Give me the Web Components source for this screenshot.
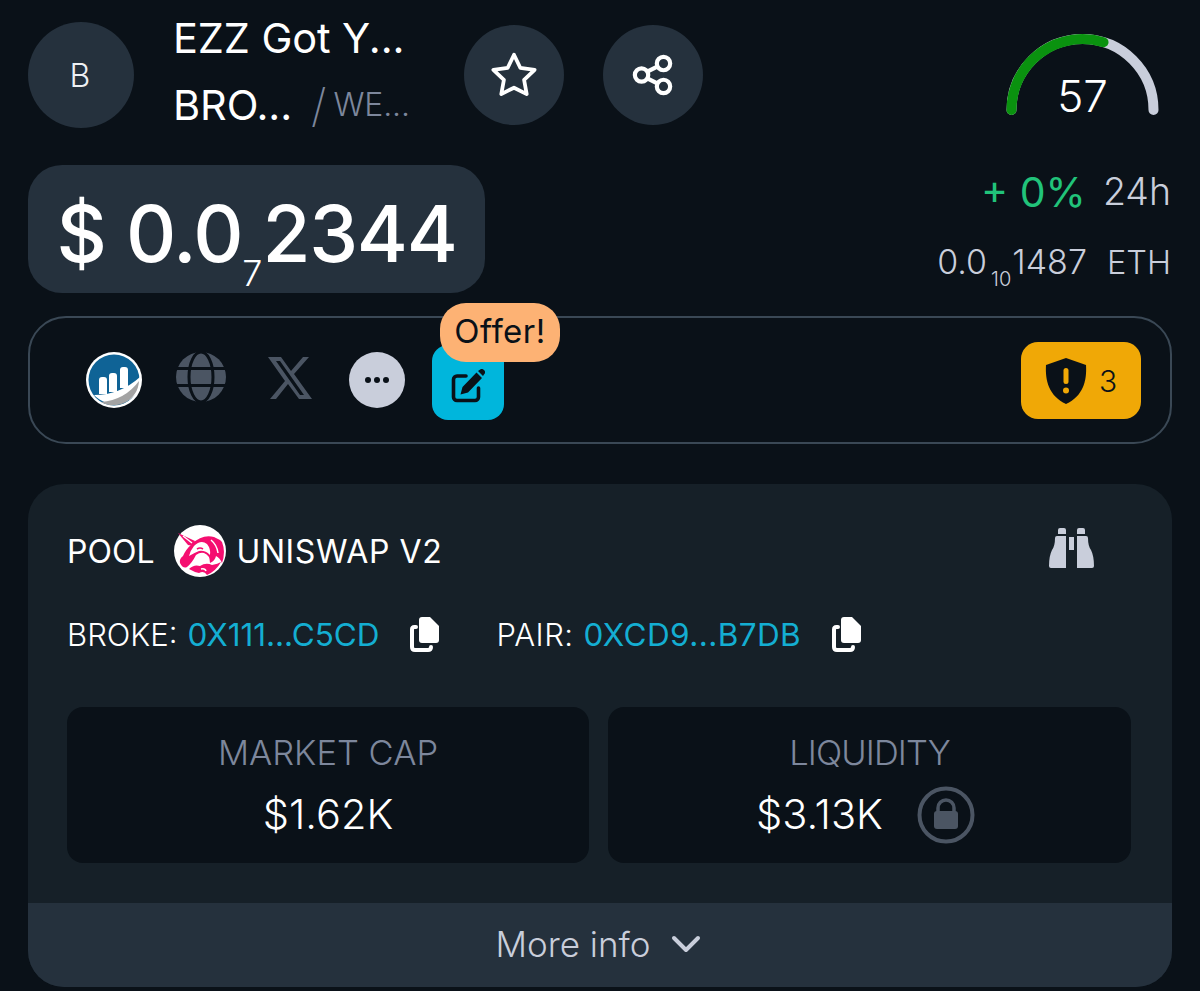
<!DOCTYPE html>
<html lang="en">
<head>
<meta charset="utf-8">
<title>Token</title>
<style>
  html, body { margin: 0; background: #0a1118; }
  body { font-family: "Inter", "Liberation Sans", sans-serif; color: #fff; }
  token-page { display: block; width: 1200px; height: 991px; overflow: hidden; }
</style>
</head>
<body>
<token-page></token-page>

<template id="token-head-tpl">
  <style>
    :host { display: flex; align-items: flex-start; height: 165px; padding-top: 22px; box-sizing: border-box; }
    .avatar { width: 106px; height: 106px; border-radius: 50%; background: #25313d; display: flex; align-items: center; justify-content: center; font-size: 32px; font-weight: 300; color: #eef0f4; flex: none; padding-right: 2px; box-sizing: border-box; }
    .names { width: 290px; margin-left: 39px; flex: none; margin-top: -17px; margin-right: 1px; }
    .line { font-size: 41.5px; line-height: 66px; height: 66px; font-weight: 400; white-space: nowrap; display: flex; align-items: center; letter-spacing: -0.1px; }
    .line + .line { margin-top: 1px; }
    .slash { color: #7d879c; font-size: 46px; font-weight: 200; margin-left: 19px; }
    .net { color: #7d879c; font-size: 32px; font-weight: 300; margin-left: 7px; }
    .round { width: 100px; height: 100px; border-radius: 50%; background: #25313d; display: flex; align-items: center; justify-content: center; flex: none; margin-top: 3px; }
    .star { margin-right: 39px; }
    slot { display: block; margin-left: auto; }
  </style>
  <div class="avatar">B</div>
  <div class="names">
    <div class="line">EZZ Got Y...</div>
    <div class="line">BRO...<span class="slash">/</span><span class="net">WE...</span></div>
  </div>
  <div class="round star">
    <svg width="50" height="50" viewBox="0 0 48 48"><path d="M24 4.500l6 12.600 13.800 1.900-10.100 9.600 2.500 13.700L24 36.200l-12.200 6.100 2.500-13.700L4.200 19l13.800-1.900z" fill="none" stroke="#fff" stroke-width="3.600" stroke-linejoin="round"/></svg>
  </div>
  <div class="round">
    <svg width="42" height="42" viewBox="0 0 44 44" fill="none" stroke="#fff" stroke-width="4.400"><circle cx="10" cy="22" r="7"/><circle cx="33" cy="10" r="7"/><circle cx="33" cy="34" r="7"/><path d="M16 18.500l11-5.500M16 25.500l11 5.500"/></svg>
  </div>
  <slot></slot>
</template>

<template id="score-gauge-tpl">
  <style>
    :host { display: block; position: relative; width: 155px; height: 95px; margin-right: 12px; margin-top: 11px; }
    svg { display: block; }
    .n { position: absolute; left: 0; right: 0; top: 36px; text-align: center; font-size: 44px; line-height: 54px; font-weight: 300; }
  </style>
  <svg width="155" height="95" viewBox="0 0 155 95" fill="none" stroke-width="10" stroke-linecap="round">
    <path d="M6.500 77a71 71 0 0 1 142 0" stroke="#c9cedb"/>
    <path d="M6.500 77a71 71 0 0 1 92-67.800" stroke="#0a920f"/>
  </svg>
  <div class="n"><slot></slot></div>
</template>

<template id="price-row-tpl">
  <style>
    :host { display: flex; justify-content: space-between; align-items: flex-start; height: 151px; }
    .pill { width: 457px; height: 128px; box-sizing: border-box; border-radius: 34px; background: #25313d; display: flex; align-items: center; justify-content: center; padding-top: 10px; font-size: 78px; font-weight: 500; white-space: nowrap; letter-spacing: -1.300px; line-height: 1; word-spacing: 1px; }
    .pill sub { font-size: 36px; font-weight: 300; line-height: 0; vertical-align: -24px; letter-spacing: 0; }
    .side { text-align: right; padding-top: 3px; margin-right: 1px; color: #c9cedb; }
    .chg { display: flex; justify-content: flex-end; align-items: center; font-size: 37.500px; line-height: 48px; height: 48px; font-weight: 300; }
    .chg b { color: #21c37a; font-weight: 400; font-size: 41px; margin-right: 17px; }
    .eth { font-size: 34px; line-height: 44px; margin-top: 24px; font-weight: 300; white-space: nowrap; }
    .eth sub { font-size: 20px; line-height: 0; vertical-align: -12px; margin-left: 4px; margin-right: 1px; }
    .eth span { margin-left: 20px; font-size: 32.500px; }
  </style>
  <div class="pill"><span>$ 0.0<sub>7</sub>2344</span></div>
  <div class="side">
    <div class="chg"><b>+ 0%</b>24h</div>
    <div class="eth">0.0<sub>10</sub>1487<span>ETH</span></div>
  </div>
</template>

<template id="link-bar-tpl">
  <style>
    :host { display: flex; align-items: center; height: 128px; box-sizing: border-box; border: 2.500px solid #3a4855; border-radius: 38px; padding: 0 29px 0 56px; }
    .ic { flex: none; display: flex; align-items: center; justify-content: center; }
    .logo { width: 56px; height: 56px; margin-right: 34px; }
    .globe { width: 50px; height: 50px; margin-right: 42px; margin-bottom: 6px; }
    .x { width: 44px; height: 44px; margin-right: 37px; margin-bottom: 5px; }
    .more { width: 56px; height: 56px; border-radius: 50%; background: #c9cedb; margin-right: 27px; gap: 3px; }
    .more i { width: 6px; height: 6px; border-radius: 50%; background: #0a1118; }
    .edit { width: 72px; height: 75px; border-radius: 16px; background: #00b6dc; position: relative; margin-top: 4px; }
    .edit svg { margin-top: 7px; }
    .offer { position: absolute; left: 8px; top: -42px; width: 120px; height: 59px; border-radius: 26px; background: #fdb274; color: #0a1118; font-size: 33px; letter-spacing: 0.500px; line-height: 57px; text-align: center; font-weight: 400; white-space: nowrap; }
    .warn { margin-left: auto; width: 120px; height: 77px; border-radius: 17px; background: #f0a806; display: flex; align-items: center; justify-content: center; gap: 12px; color: #0a1118; font-size: 30px; font-weight: 300; margin-top: 1px; }
  </style>
  <div class="ic logo">
    <svg width="56" height="56" viewBox="0 0 56 56">
      <circle cx="28" cy="28" r="28" fill="#fff"/>
      <circle cx="28" cy="28" r="25.500" fill="#0f6396"/>
      <path d="M13 28q0-3 3-3h2q3 0 3 3v14h-8zM23 24q0-3 3-3h2q3 0 3 3v16h-8zM34 18q0-3 3-3h2q3 0 3 3v18h-8z" fill="#fff"/>
      <path d="M8 43q26 0 46-18l1 8a28 28 0 0 1-47 10z" fill="#fff"/>
      <path d="M15 50q24-2 38-21a25.500 25.500 0 0 1-38 21z" fill="#a3a3a3"/>
    </svg>
  </div>
  <div class="ic globe">
    <svg width="50" height="50" viewBox="0 0 50 50"><circle cx="25" cy="25" r="25" fill="#4b5563"/><g fill="none" stroke="#0a1118" stroke-width="3"><ellipse cx="25" cy="25" rx="12" ry="25"/><path d="M0 16.500h50M0 33.500h50"/></g></svg>
  </div>
  <div class="ic x">
    <svg width="44" height="42" viewBox="0 0 44 42"><path fill-rule="evenodd" d="M0 0h13l10 14L35 0h6L26 17l18 25H31L20 27 8 42H2l15-18zM8 4l24 34h4L12 4z" fill="#4b5563"/></svg>
  </div>
  <div class="ic more"><i></i><i></i><i></i></div>
  <div class="ic edit">
    <svg width="34" height="34" viewBox="0 0 34 34"><path d="M15 7H6a3.500 3.500 0 0 0-3.500 3.500V28A3.500 3.500 0 0 0 6 31.500h18a3.500 3.500 0 0 0 3.500-3.500v-9" fill="none" stroke="#0a1118" stroke-width="3.600" stroke-linecap="round"/><path d="M25.500 3.500l5.500 5.500-14 14.500-7.500 2 2-7.500zM27 2l1.500-1a2.800 2.800 0 0 1 4.500 4.500l-1 1.500z" fill="#0a1118"/></svg>
    <div class="offer">Offer!</div>
  </div>
  <div class="warn">
    <svg width="42" height="46" viewBox="0 0 42 46"><path d="M21 0l20 7c1 16-3 31-20 39C4 38 0 23 1 7z" fill="#0a1118"/><rect x="18.500" y="10" width="5" height="16" rx="2.500" fill="#f0a806"/><circle cx="21" cy="32.500" r="3" fill="#f0a806"/></svg>
    <span>3</span>
  </div>
</template>

<template id="stat-card-tpl">
  <style>
    :host { display: flex; flex-direction: column; align-items: center; height: 156px; background: #0a1118; border-radius: 16px; box-sizing: border-box; padding-top: 24px; }
    .k { color: #7d879c; font-size: 34.500px; line-height: 44px; font-weight: 300; white-space: nowrap; }
    .v { display: flex; align-items: center; font-size: 41.500px; line-height: 50px; font-weight: 300; height: 58px; margin-top: 10px; white-space: nowrap; }
    ::slotted(svg) { margin-left: 34px; margin-right: 8px; margin-top: 2px; }
  </style>
  <div class="k"><slot name="k"></slot></div>
  <div class="v"><slot></slot></div>
</template>

<template id="pool-card-tpl">
  <style>
    :host { display: block; height: 503px; background: #162028; border-radius: 36px; overflow: hidden; position: relative; }
    .body { padding: 0 41px 0 39px; }
    .head { display: flex; align-items: center; height: 52px; margin-top: 41px; font-size: 32px; font-weight: 400; white-space: nowrap; }
    .head svg.uni { margin: 0 10px 0 20px; flex: none; }
    .head .dex { letter-spacing: 0.600px; }
    .head .bin { margin-left: auto; margin-right: 37px; margin-top: -6px; flex: none; }
    .addr { display: flex; align-items: center; height: 48px; margin-top: 33px; font-size: 31px; font-weight: 300; white-space: nowrap; }
    .addr a { color: #14aed2; margin-left: 10px; font-size: 31.500px; font-weight: 400; letter-spacing: -0.050px; }
    .addr a.pair { letter-spacing: 0.400px; }
    .addr span.pair { letter-spacing: 0.500px; }
    .addr svg { margin-left: 31px; margin-right: 57px; flex: none; }
    .grid { display: grid; grid-template-columns: 522px 523px; gap: 19px; margin-top: 49px; }
    .tight { letter-spacing: -0.900px; }
    .more { position: absolute; left: 0; right: 0; bottom: 0; height: 84px; box-sizing: border-box; padding: 0 4px 2px 0; background: #25313d; display: flex; align-items: center; justify-content: center; gap: 20px; color: #c9cedb; font-size: 35px; font-weight: 300; }
  </style>
  <div class="body">
    <div class="head">
      <span>POOL</span>
      <svg class="uni" width="52" height="52" viewBox="0 0 52 52">
        <circle cx="26" cy="26" r="26" fill="#fff"/>
        <g fill="#f50e70">
          <path d="M4 8l17 8-2 5-5-1z"/>
          <path d="M18 19q10-10 22-7l6 3 2 2q4 10 0 21-2-5-6-7-1 5-6 7 0-8-6-10-4-1-8 2-4 8-9 12-4 2-7-4-1-4 3-7 3-7 9-12z"/>
          <path d="M15 44q5-5 11-3 6-4 12-1 6-1 9-3-5 9-14 13-3-5-8-2-5-1-10-4z"/>
        </g>
        <path d="M20 21q7-7 13-2 4 5 3 11-5-5-11-4-5 2-10 5 1-5 5-10z" fill="#fff"/>
        <path d="M23 24q3-2 6 0" fill="none" stroke="#f50e70" stroke-width="1.600"/>
        <path d="M37 15q6 5 7 13M9 11l9 7M27 44q4-1 5 2" fill="none" stroke="#fff" stroke-width="1.500"/>
      </svg>
      <span class="dex">UNISWAP V2</span>
      <svg class="bin" width="45" height="41" viewBox="0 0 45 41" fill="#c9cedb"><path d="M11 0h4q2 0 2 2v4H9V2q0-2 2-2zM30 0h4q2 0 2 2v4H28V2q0-2 2-2zM8 8h9v32H2q-2 0-2-2 0-10 3-16 3-4 3-12 0-2 2-2zM28 8h9q2 0 2 2 0 8 3 12 3 6 3 16 0 2-2 2H28z"/><rect x="20" y="9" width="5" height="13"/></svg>
    </div>
    <div class="addr">
      <span>BROKE:</span><a>0X111...C5CD</a>
      <svg width="29" height="35" viewBox="0 0 29 35"><path d="M6 10H4.500Q2 10 2 12.500V30q0 3 3 3h13q3 0 3-3" fill="none" stroke="#fff" stroke-width="4" stroke-linecap="round"/><path d="M12 0h8l9 9v14q0 3-3 3H12q-3 0-3-3V3q0-3 3-3z" fill="#fff"/></svg>
      <span class="pair">PAIR:</span><a class="pair">0XCD9...B7DB</a>
      <svg width="29" height="35" viewBox="0 0 29 35"><path d="M6 10H4.500Q2 10 2 12.500V30q0 3 3 3h13q3 0 3-3" fill="none" stroke="#fff" stroke-width="4" stroke-linecap="round"/><path d="M12 0h8l9 9v14q0 3-3 3H12q-3 0-3-3V3q0-3 3-3z" fill="#fff"/></svg>
    </div>
    <div class="grid">
      <stat-card><span slot="k">MARKET CAP</span>$1.62K</stat-card>
      <stat-card><span slot="k" class="tight">LIQUIDITY</span>$3.13K
        <svg width="58" height="58" viewBox="0 0 58 58"><circle cx="29" cy="29" r="26.500" fill="none" stroke="#4b5563" stroke-width="4"/><path d="M21 26v-4a8 8 0 0 1 16 0v4" fill="none" stroke="#4b5563" stroke-width="3.500"/><rect x="17" y="25" width="24" height="18" rx="3" fill="#4b5563"/></svg>
      </stat-card>
    </div>
  </div>
  <div class="more">More info
    <svg width="30" height="18" viewBox="0 0 30 18"><path d="M3 3l12 12L27 3" fill="none" stroke="#c9cedb" stroke-width="4" stroke-linecap="round" stroke-linejoin="round"/></svg>
  </div>
</template>

<template id="token-page-tpl">
  <style>
    :host { display: block; }
    .wrap { padding: 0 28px; display: flex; flex-direction: column; }
    link-bar { margin-bottom: 40px; }
  </style>
  <div class="wrap">
    <token-head><score-gauge>57</score-gauge></token-head>
    <price-row></price-row>
    <link-bar></link-bar>
    <pool-card></pool-card>
  </div>
</template>

<script>
  // every element is just its template stamped into an open shadow root
  function define(name) {
    customElements.define(name, class extends HTMLElement {
      constructor() {
        super();
        this.attachShadow({ mode: 'open' });
        var tpl = document.getElementById(name + '-tpl');
        this.shadowRoot.appendChild(tpl.content.cloneNode(true));
      }
    });
  }
  ['stat-card', 'score-gauge', 'token-head', 'price-row', 'link-bar', 'pool-card', 'token-page'].forEach(define);
</script>
</body>
</html>
